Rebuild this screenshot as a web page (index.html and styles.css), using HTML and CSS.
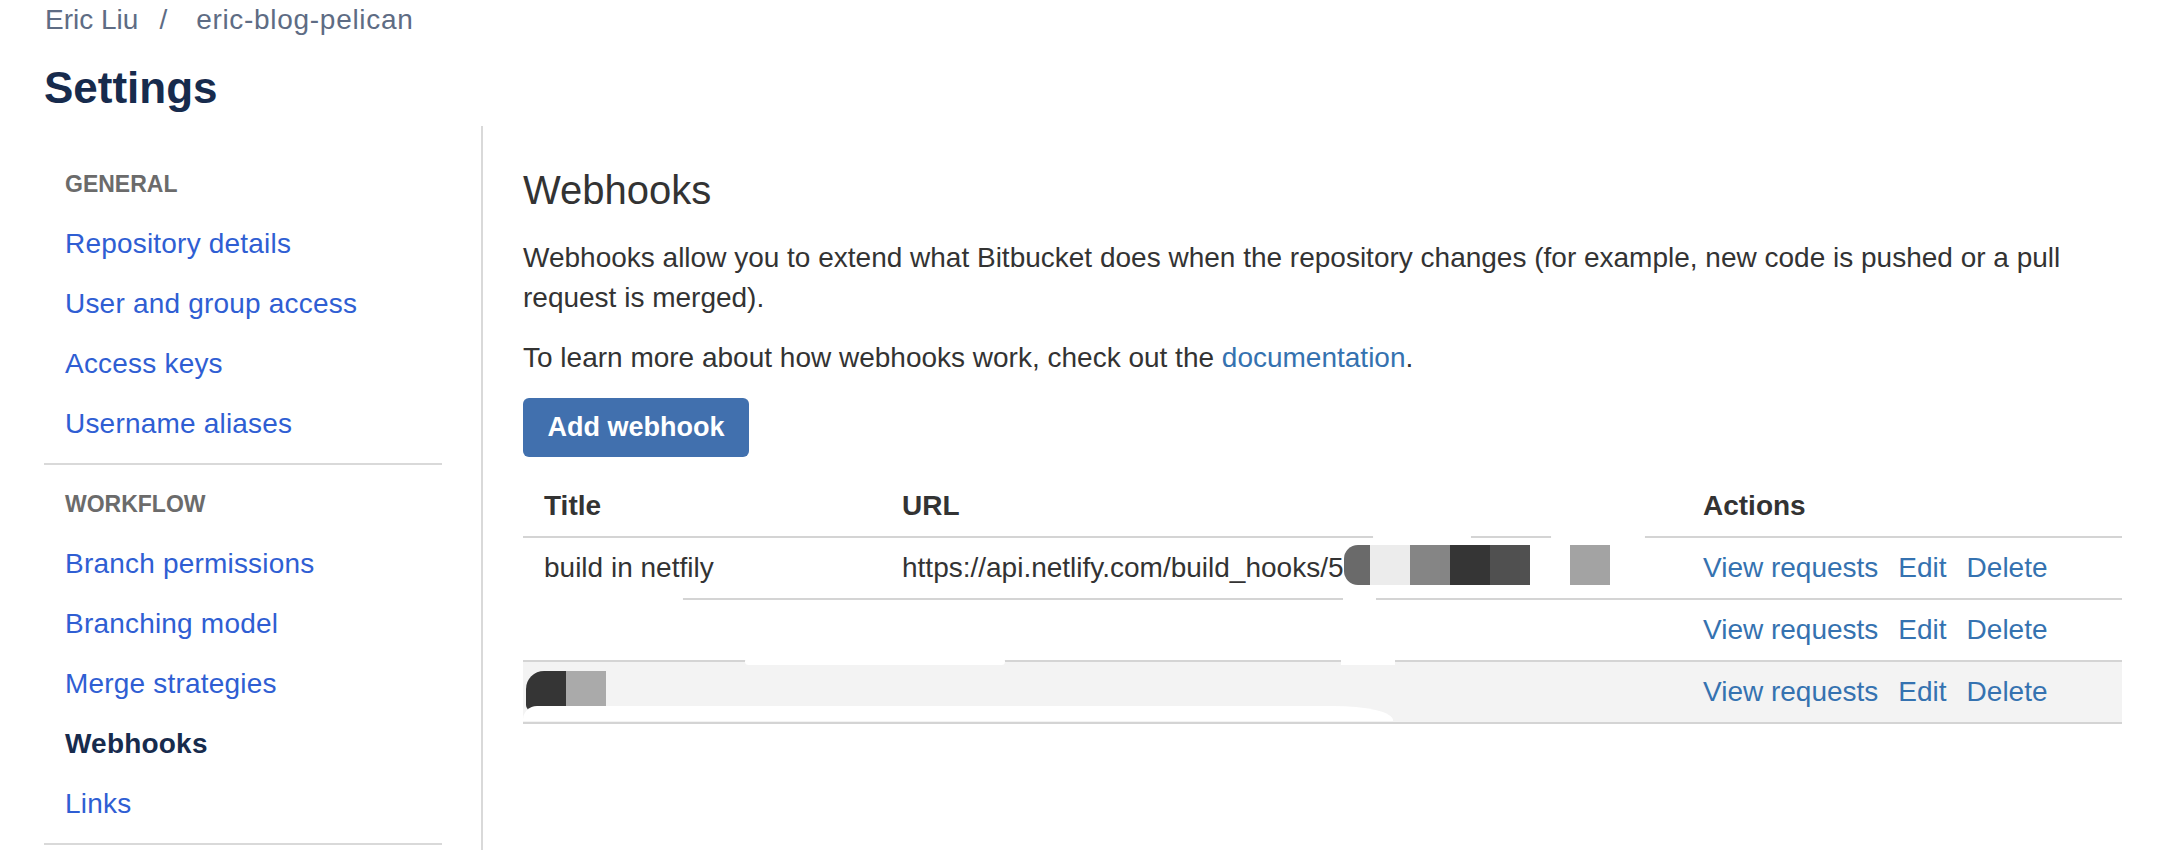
FILE: index.html
```html
<!DOCTYPE html>
<html lang="en">
<head>
<meta charset="utf-8">
<title>Settings - Webhooks</title>
<link rel="stylesheet" href="styles.css">
</head>
<body>
<div class="page">
  <header class="page-header">
    <nav class="breadcrumb">
      <span class="crumb">Eric Liu</span><span class="sep">/</span><span class="crumb crumb-repo">eric-blog-pelican</span>
    </nav>
    <h1 class="page-title">Settings</h1>
  </header>
  <div class="layout">
    <aside class="sidebar">
      <div class="nav-group">
        <div class="nav-heading">General</div>
        <a class="nav-item">Repository details</a>
        <a class="nav-item">User and group access</a>
        <a class="nav-item">Access keys</a>
        <a class="nav-item">Username aliases</a>
      </div>
      <div class="nav-group">
        <div class="nav-heading">Workflow</div>
        <a class="nav-item">Branch permissions</a>
        <a class="nav-item">Branching model</a>
        <a class="nav-item">Merge strategies</a>
        <a class="nav-item active">Webhooks</a>
        <a class="nav-item">Links</a>
      </div>
    </aside>
    <main class="content">
      <h2 class="content-title">Webhooks</h2>
      <p class="para">Webhooks allow you to extend what Bitbucket does when the repository changes (for example, new code is pushed or a pull request is merged).</p>
      <p class="para">To learn more about how webhooks work, check out the <a class="link">documentation</a>.</p>
      <button class="btn-primary">Add webhook</button>
      <div class="table-wrap">
        <table class="hooks">
          <thead>
            <tr>
              <th class="col-title">Title</th>
              <th class="col-url">URL</th>
              <th class="col-actions">Actions</th>
            </tr>
          </thead>
          <tbody>
            <tr>
              <td>build in netfily</td>
              <td class="url">https://api.netlify.com/build_hooks/5<span class="redact"><span class="r r1"></span><span class="r r2"></span><span class="r r3"></span><span class="r r4"></span><span class="r r5"></span><span class="r r6"></span><span class="r r7"></span></span></td>
              <td class="actions"><a class="link">View requests</a><a class="link">Edit</a><a class="link">Delete</a></td>
            </tr>
            <tr>
              <td></td>
              <td></td>
              <td class="actions"><a class="link">View requests</a><a class="link">Edit</a><a class="link">Delete</a></td>
            </tr>
            <tr class="row-alt">
              <td><span class="redact small"><span class="r s1"></span><span class="r s2"></span></span></td>
              <td></td>
              <td class="actions"><a class="link">View requests</a><a class="link">Edit</a><a class="link">Delete</a></td>
            </tr>
          </tbody>
        </table>
        <span class="smudge sm1"></span>
        <span class="smudge sm2"></span>
        <span class="smudge sm3"></span>
        <span class="smudge sm4"></span>
        <span class="smudge sm5"></span>
        <span class="smudge sm6"></span>
        <span class="smudge sm7"></span>
      </div>
    </main>
  </div>
</div>
</body>
</html>
```

FILE: styles.css
```css
* { box-sizing: border-box; }
html, body { margin: 0; padding: 0; background: #fff; }
body {
  font-family: "Liberation Sans", Arial, Helvetica, sans-serif;
  color: #333;
  height: 850px;
  overflow: hidden;
}
.page { padding: 0 54px 0 44px; }

.page-header { display: flex; flex-direction: column; }
.breadcrumb {
  font-size: 28px;
  line-height: 40px;
  color: #5e6c84;
  padding-left: 1px;
}
.breadcrumb .sep { margin: 0 29px 0 21px; }
.crumb-repo { letter-spacing: 0.7px; }
.page-title {
  margin: 20px 0 0;
  font-size: 44px;
  line-height: 56px;
  font-weight: bold;
  color: #172b4d;
}

.layout {
  display: flex;
  margin-top: 10px;
  min-height: 730px;
}
.sidebar {
  width: 398px;
  flex: none;
  padding-top: 38px;
  margin-right: 39px;
}
.nav-group {
  border-bottom: 2px solid #d9d9d9;
  padding-bottom: 9px;
  margin-bottom: 19px;
  display: flex;
  flex-direction: column;
}
.nav-heading {
  font-size: 23px;
  line-height: 40px;
  font-weight: bold;
  text-transform: uppercase;
  color: #6b6b6b;
  padding-left: 21px;
  margin-bottom: 10px;
}
.nav-item {
  display: block;
  font-size: 28px;
  line-height: 60px;
  height: 60px;
  padding-left: 21px;
  color: #2f5ed3;
  text-decoration: none;
  letter-spacing: 0.2px;
}
.nav-item.active {
  color: #172b4d;
  font-weight: bold;
}

.content {
  flex: 1;
  border-left: 2px solid #d9d9d9;
  padding: 40px 0 0 40px;
}
.content-title {
  margin: 0 0 24px;
  font-size: 40px;
  line-height: 48px;
  font-weight: normal;
  color: #333;
}
.para {
  margin: 0 0 20px;
  font-size: 28px;
  line-height: 40px;
  color: #333;
}
.link { color: #3572b0; text-decoration: none; }

.btn-primary {
  display: block;
  font-family: "Liberation Sans", Arial, Helvetica, sans-serif;
  font-size: 27px;
  font-weight: bold;
  color: #fff;
  background: #4170ae;
  border: none;
  border-radius: 6px;
  height: 59px;
  padding: 0 22px;
  margin: 0 0 19px;
  width: 226px;
}

.table-wrap { position: relative; width: 1599px; }
.hooks {
  width: 1599px;
  border-collapse: collapse;
  table-layout: fixed;
  font-size: 28px;
  line-height: 40px;
}
.hooks th, .hooks td {
  text-align: left;
  padding: 10px 20px 10px 21px;
  border-bottom: 2px solid #d4d4d4;
  white-space: nowrap;
  vertical-align: middle;
}
.hooks tbody td { height: 60px; }
.hooks th { font-weight: bold; color: #333; }
.col-title { width: 358px; }
.col-url { width: 801px; }
.col-actions { width: 440px; }
.row-alt td { background: #f3f3f3; }
.actions .link { margin-right: 20px; }

.redact { display: inline-flex; vertical-align: top; height: 40px; position: relative; top: -3px; }
.redact .r { display: block; width: 40px; height: 40px; }
.r1 { width: 26px !important; background: #6a6a6a; border-radius: 14px 0 0 14px; }
.r2 { background: #ececec; }
.r3 { background: #858585; }
.r4 { background: #353535; }
.r5 { background: #505050; }
.r6 { background: #fff; }
.r7 { background: #a3a3a3; }
.redact.small { top: -1px; margin-left: -18px; }
.s1 { background: #353535; border-radius: 18px 0 0 6px; }
.s2 { background: #aaaaaa; }

.smudge { position: absolute; background: #fff; display: block; }
.sm1 { left: 850px; top: 58px; width: 98px; height: 6px; border-radius: 3px; }
.sm2 { left: 1028px; top: 58px; width: 94px; height: 6px; border-radius: 3px; }
.sm3 { left: 0; top: 120px; width: 160px; height: 6px; border-radius: 0 3px 3px 0; }
.sm4 { left: 820px; top: 120px; width: 33px; height: 6px; }
.sm5 { left: 222px; top: 182px; width: 260px; height: 7px; border-radius: 4px; }
.sm6 { left: 818px; top: 182px; width: 54px; height: 7px; }
.sm7 { left: 0; top: 230px; width: 870px; height: 15px; border-radius: 14px 60px 0 0 / 14px 14px 0 0; }
```
